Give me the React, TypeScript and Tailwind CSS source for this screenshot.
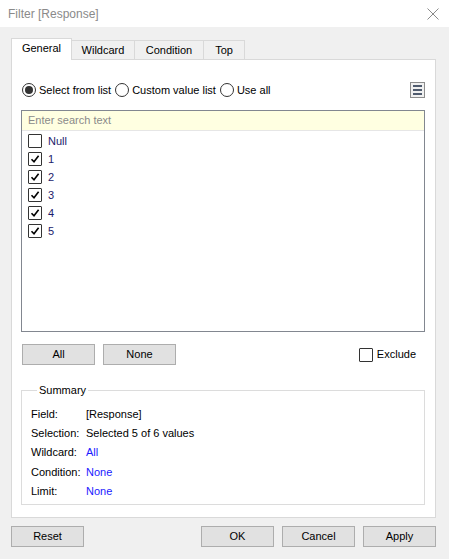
import React from "react"

const font = { fontFamily: '"Liberation Sans", Arial, sans-serif' }

function Radio({ checked, label }: { checked?: boolean; label: string }) {
  return (
    <label className="flex items-center gap-[3px]">
      <span className="flex h-[14px] w-[14px] items-center justify-center rounded-full border border-[#333333] bg-white">
        {checked && <span className="h-[8px] w-[8px] rounded-full bg-[#333333]" />}
      </span>
      <span>{label}</span>
    </label>
  )
}

function Check({ checked }: { checked?: boolean }) {
  return (
    <span className="flex h-[14px] w-[14px] shrink-0 items-center justify-center rounded-[1px] border border-[#333333] bg-white">
      {checked && (
        <svg width="10" height="10" viewBox="0 0 10 10">
          <path d="M1.5 5.2 L4 7.8 L8.6 1.8" fill="none" stroke="#000" strokeWidth="1.6" />
        </svg>
      )}
    </span>
  )
}

function Button({ children }: { children: React.ReactNode }) {
  return (
    <button className="h-[21px] w-[73px] border border-[#adadad] bg-[#e1e1e1] text-[11px] text-black">
      {children}
    </button>
  )
}

const items = [
  { label: "Null", checked: false },
  { label: "1", checked: true },
  { label: "2", checked: true },
  { label: "3", checked: true },
  { label: "4", checked: true },
  { label: "5", checked: true },
]

const summary = [
  { label: "Field:", value: "[Response]", blue: false },
  { label: "Selection:", value: "Selected 5 of 6 values", blue: false },
  { label: "Wildcard:", value: "All", blue: true },
  { label: "Condition:", value: "None", blue: true },
  { label: "Limit:", value: "None", blue: true },
]

export default function App() {
  return (
    <div className="flex h-[559px] w-[449px] flex-col bg-[#f0f0f0] text-[11px] text-black" style={font}>
      {/* title bar */}
      <div className="flex h-[27px] items-center justify-between bg-white pl-[8px] pr-[10px]">
        <span className="text-[12px] text-[#8a8a8a]">Filter [Response]</span>
        <svg width="12" height="12" viewBox="0 0 12 12">
          <path d="M0.5 0.5 L11.5 11.5 M11.5 0.5 L0.5 11.5" stroke="#8a8a8a" strokeWidth="1" />
        </svg>
      </div>

      {/* tabs */}
      <div className="flex h-[32px] items-end pl-[11px] pr-[13px]">
        <div className="relative z-10 -mb-px flex h-[22px] w-[61px] items-center justify-center border border-b-0 border-[#d9d9d9] bg-white pb-[2px]">
          General
        </div>
        <div className="flex h-[19px] w-[63px] items-center justify-center border border-b-0 border-l-0 border-[#d9d9d9]">
          Wildcard
        </div>
        <div className="flex h-[19px] w-[69px] items-center justify-center border border-b-0 border-l-0 border-[#d9d9d9]">
          Condition
        </div>
        <div className="flex h-[19px] w-[41px] items-center justify-center border border-b-0 border-l-0 border-[#d9d9d9]">
          Top
        </div>
      </div>

      {/* panel */}
      <div className="ml-[11px] mr-[13px] flex h-[459px] flex-col border border-[#d9d9d9] bg-white pl-[9px] pr-[10px]">
        <div className="mt-[22px] flex h-[16px] items-center justify-between">
          <div className="flex items-center gap-[4px] pl-[1px]">
            <Radio checked label="Select from list" />
            <Radio label="Custom value list" />
            <Radio label="Use all" />
          </div>
          <div className="flex h-[16px] w-[15px] flex-col items-center justify-center gap-[2px] border border-[#8c8c8c] bg-[#f0f0f0]">
            <span className="h-[2px] w-[9px] bg-[#4f5b6e]" />
            <span className="h-[2px] w-[9px] bg-[#4f5b6e]" />
            <span className="h-[2px] w-[9px] bg-[#4f5b6e]" />
          </div>
        </div>

        <div className="mt-[12px] flex h-[222px] flex-col border border-[#828790]">
          <div className="flex h-[20px] items-center border-b border-[#e6e6e6] bg-[#ffffe1] pl-[6px] text-[#8a8a8a]">
            Enter search text
          </div>
          <div className="flex flex-col pt-[1px]">
            {items.map((it) => (
              <div key={it.label} className="flex h-[18px] items-center gap-[6px] pl-[6px] text-[#1b1b6b]">
                <Check checked={it.checked} />
                <span>{it.label}</span>
              </div>
            ))}
          </div>
        </div>

        <div className="mt-[12px] flex items-center">
          <div className="flex gap-[8px] pl-[1px]">
            <Button>All</Button>
            <Button>None</Button>
          </div>
          <label className="ml-auto flex items-center gap-[4px] pr-[9px]">
            <Check />
            <span>Exclude</span>
          </label>
        </div>

        <fieldset className="mt-[17px] h-[123px] border border-[#dcdcdc] pl-[9px] pt-[6px]">
          <legend className="ml-[6px] px-[2px]">Summary</legend>
          {summary.map((s) => (
            <div key={s.label} className="flex h-[19.3px] items-center">
              <span className="w-[55px]">{s.label}</span>
              <span className={s.blue ? "text-[#1a1aff]" : ""}>{s.value}</span>
            </div>
          ))}
        </fieldset>
      </div>

      {/* bottom buttons */}
      <div className="mt-[8px] flex pl-[11px] pr-[13px]">
        <Button>Reset</Button>
        <div className="ml-auto flex gap-[8px]">
          <Button>OK</Button>
          <Button>Cancel</Button>
          <Button>Apply</Button>
        </div>
      </div>
    </div>
  )
}
